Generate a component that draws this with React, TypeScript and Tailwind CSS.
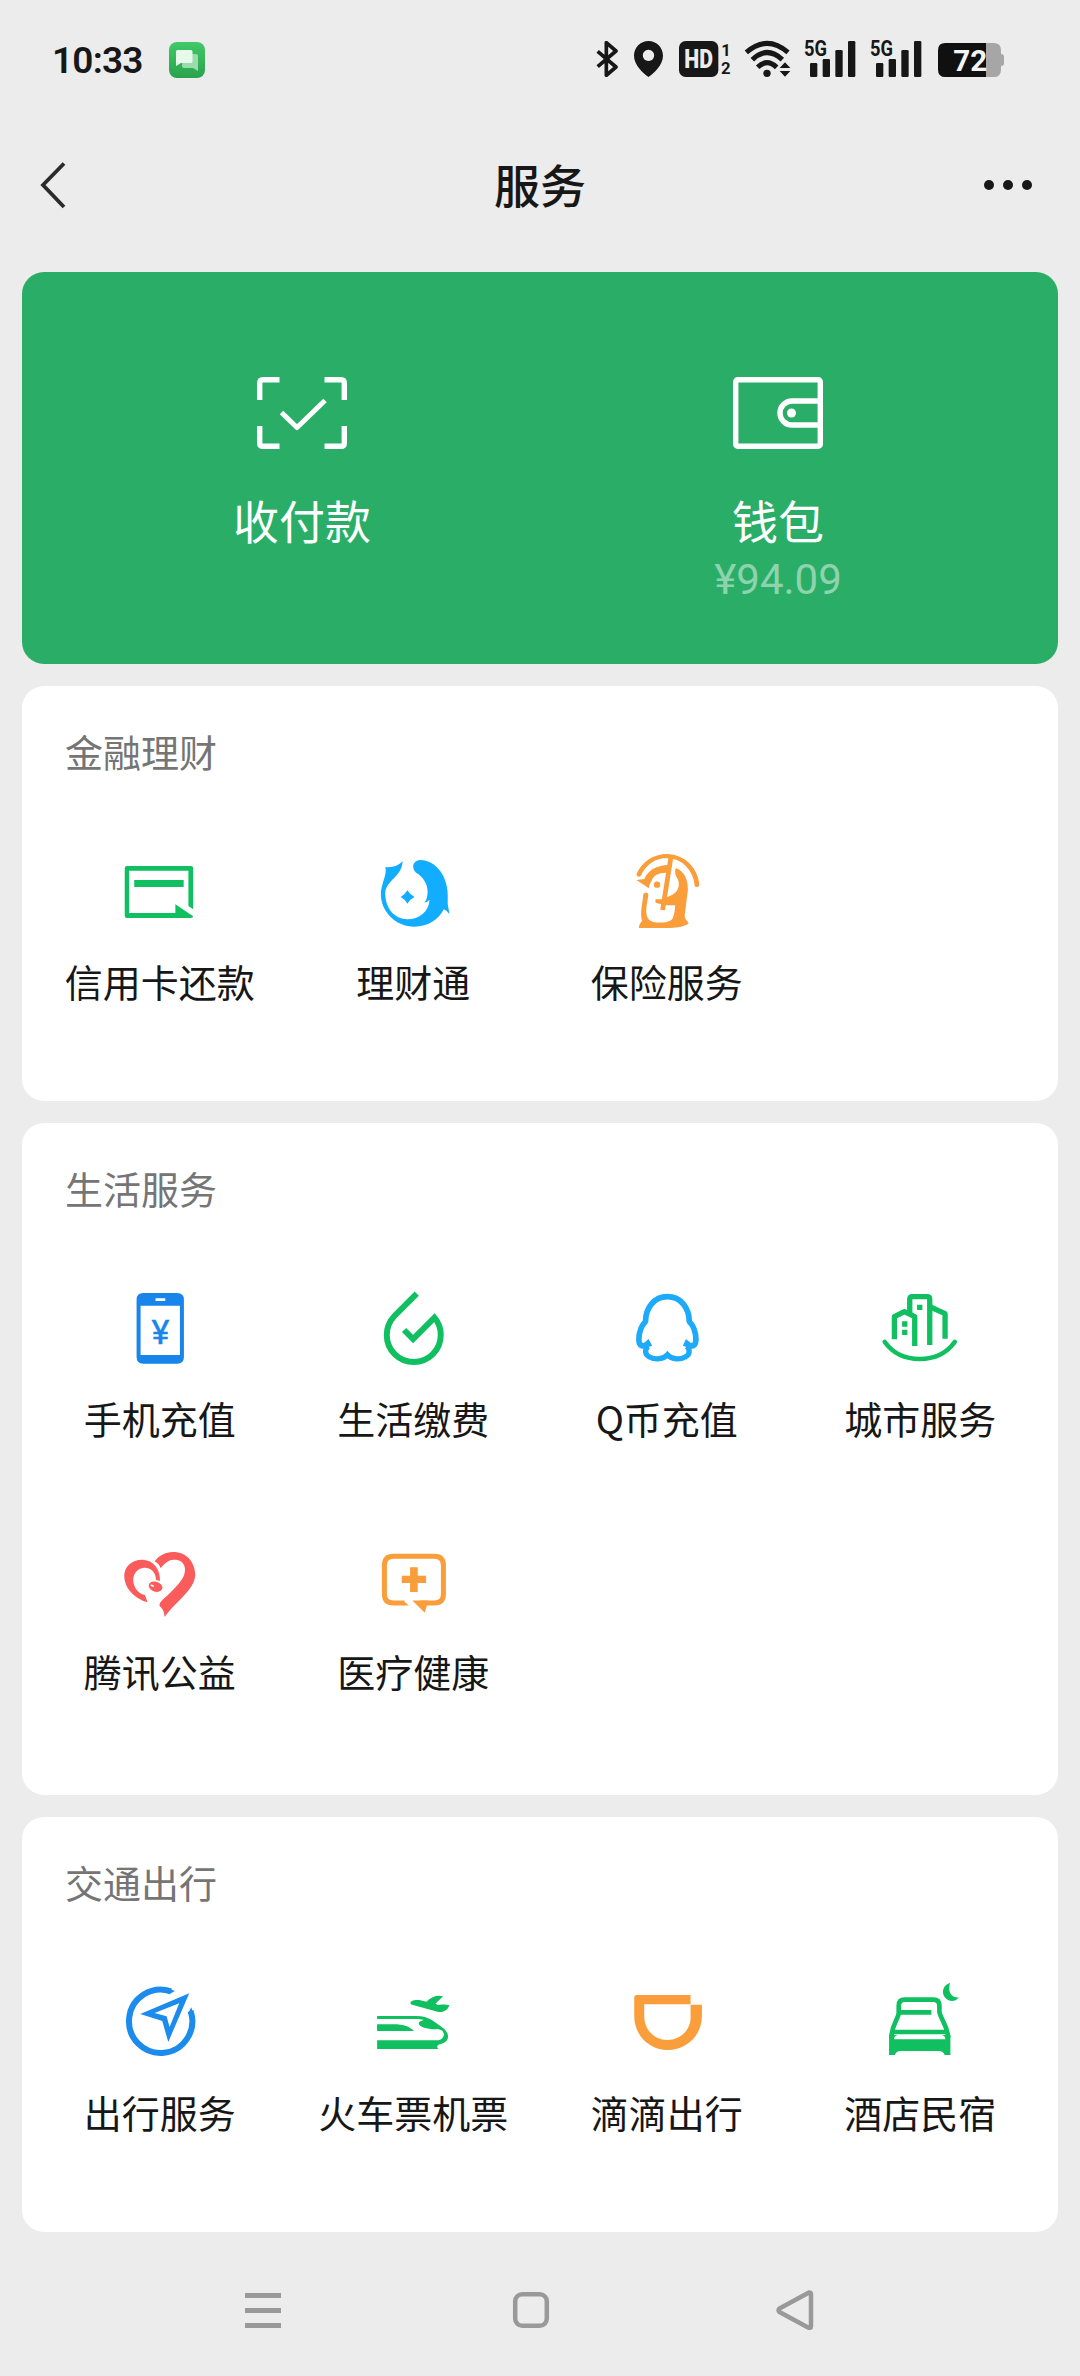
import type { ReactNode } from "react";

type Service = { label: string; icon: ReactNode };
type Section = { title: string; height: string; services: Service[] };

function Icon({ box, children }: { box: string; children: ReactNode }) {
  return (
    <svg
      viewBox={box}
      preserveAspectRatio="none"
      fill="none"
      className="block h-20 w-20 overflow-visible"
    >
      {children}
    </svg>
  );
}

const creditCard = (
  <Icon box="50 36 202.3 240">
    <path
      fill="#10c060"
      d="M62 84Q62 78 68 78H229Q235 78 235 84V208L223 198V92H73V219H190V193L235 229Q235 234 229 234H68Q62 234 62 228Z"
    />
    <path fill="#10c060" d="M86 120H211V141H86Z" />
  </Icon>
);

const wealth = (
  <Icon box="691 36 202.3 240">
    <path
      fill="#12adff"
      d="M766 64C755 78 738 84 722 81C727 102 715 122 711 155C708 215 750 260 795 260C832 260 858 237 870 208C877 211 880 217 884 222C883 205 879 197 880 180C884 110 850 60 810 60C790 62 788 86 800 98C817 110 829 130 829 155C829 170 827 178 821 187C826 187 830 184 834 179C832 215 808 238 778 238C745 237 722 205 722 160C724 120 764 112 766 64Z"
    />
    <path fill="#12adff" d="M778 151Q784 163 796 171Q784 178 778 191Q772 178 761 171Q772 163 778 151Z" />
  </Icon>
);

const insurance = (
  <Icon box="1332 36 202.3 240">
    <path stroke="#fa9d3b" strokeWidth="12" strokeLinecap="round" d="M1362 104C1374 70 1401 48 1434 48C1476 50 1505 88 1509 135" />
    <path
      fill="#fa9d3b"
      d="M1356 120L1376 117C1384 93 1404 76 1438 75L1434 98C1412 97 1397 107 1394 124C1390 130 1388 138 1387 145Z"
    />
    <path
      fill="#fa9d3b"
      d="M1457 85C1478 95 1486 120 1486 150L1478 225C1477 240 1487 243 1488 250C1478 260 1462 263 1440 264H1362C1362 256 1365 249 1370 243C1364 215 1372 190 1373 163C1375 157 1385 157 1386 163C1384 190 1374 222 1388 240C1398 251 1438 251 1447 236C1453 222 1453 208 1454 196H1428L1404 188V178H1420L1432 172C1456 163 1464 148 1463 130C1463 115 1452 112 1454 88Z"
    />
    <path stroke="#fa9d3b" strokeWidth="12" d="M1443 52L1422 210" />
    <ellipse cx="1408" cy="134" rx="8" ry="9.5" fill="#fa9d3b" />
  </Icon>
);

const phone = (
  <Icon box="239.25 87 240 240">
    <path
      fill="#1985ea"
      fillRule="evenodd"
      d="M309 99H411Q431 99 431 119V291Q431 311 411 311H309Q289 311 289 291V119Q289 99 309 99ZM301 137V285H419V137ZM346 115V123H375V115Z"
    />
    <text x="360.5" y="251" fill="#1985ea" stroke="#1985ea" strokeWidth="1.500" textAnchor="middle" className="font-['Roboto',sans-serif] text-[102px]">
      ¥
    </text>
  </Icon>
);

const utilities = (
  <Icon box="999.75 87 240 240">
    <path
      stroke="#10c060"
      strokeWidth="18"
      d="M1131 101L1064 168C1049 184 1041 203 1041 225A81 81 0 0 0 1203 225C1203 204 1196 187 1184 173L1120 237L1093 210"
    />
  </Icon>
);

const qcoin = (
  <Icon box="200.3 87 240 240">
    <path
      stroke="#1eaafa"
      strokeWidth="17"
      strokeLinejoin="round"
      d="M321.500 110C281 110 256 145 256 184C243 198 236 215 236 238C236 254 243 262 254 255M321.500 110C362 110 387 145 387 184C400 198 407 215 407 238C407 254 400 262 389 255"
    />
    <path fill="#1eaafa" d="M265 237L276 257L250 266L243 256ZM377 237L368 257L394 266L400 256Z" />
    <path
      stroke="#1eaafa"
      strokeWidth="16"
      d="M264 259C252 268 254 285 268 291C287 301 310 297 321.500 284C333 297 356 301 375 291C389 285 391 268 379 259"
    />
  </Icon>
);

const city = (
  <Icon box="960.8 87 240 240">
    <g stroke="#10c060" strokeWidth="16" strokeLinejoin="round">
      <path d="M1004 238V170L1034 155L1065 170V258" />
      <path d="M1050 160V118Q1050 110 1058 110H1102Q1110 110 1110 118V255" />
      <path d="M1112 141L1156 161V236" />
    </g>
    <path stroke="#10c060" strokeWidth="14" strokeLinecap="round" d="M975 246Q1012 297 1080 297Q1148 297 1185 246" />
    <path fill="#10c060" d="M1072 134H1088V150H1072ZM1027 184H1043V200H1027ZM1027 209H1043V225H1027Z" />
  </Icon>
);

const charity = (
  <Icon box="239.25 846 240 240">
    <path
      fill="#fa5c5c"
      d="M322 1027C283 1015 252 985 252 947C252 920 275 898 308 899C342 901 361 930 359 963L347 959C347 938 333 922 312 923C291 924 278 942 279 962C280 985 298 1002 314 1005Z"
    />
    <path
      fill="#fa5c5c"
      d="M343 904C355 888 375 876 398 876C440 876 465 908 465 945C462 990 413 1018 373 1071C372 1055 367 1045 358 1038C355 1024 375 1015 395 993C420 968 436 950 434 925C432 905 415 898 400 899C380 900 370 915 361 924C357 914 350 907 343 904Z"
    />
    <ellipse cx="346" cy="980" rx="21" ry="15" fill="#fa5c5c" transform="rotate(18 346 980)" />
    <ellipse cx="336" cy="977" rx="6" ry="3" fill="#fff" transform="rotate(18 336 977)" />
  </Icon>
);

const medical = (
  <Icon box="999.75 846 240 240">
    <path stroke="#fa9d3b" strokeWidth="15" d="M1094 1029H1061Q1034 1029 1034 1002V916Q1034 889 1061 889H1184Q1211 889 1211 916V1002Q1211 1029 1184 1029H1140" />
    <path fill="#fa9d3b" d="M1090 1021.500L1107 1036.500H1090ZM1118 1021.500H1166L1155 1058Z" />
    <path fill="#fa9d3b" d="M1111 922H1134V947H1159V969H1134V996H1111V969H1086V947H1111Z" />
  </Icon>
);

const travel = (
  <Icon box="239.25 399 240 240">
    <path stroke="#1c8bee" strokeWidth="18" d="M392 424A95 95 0 1 0 451 483" />
    <path fill="#1c8bee" d="M384 415L404 423L388 432ZM443 492L453 472L460 492Z" />
    <path
      fill="#1c8bee"
      fillRule="evenodd"
      d="M447 430L384 576L366 513L300 492ZM417 460L343 489L379 499L388 531Z"
    />
  </Icon>
);

const train = (
  <Icon box="999.75 399 240 240">
    <path
      fill="#10c060"
      d="M1012 498H1130C1170 498 1182 516 1205 530C1232 548 1233 576 1200 583C1190 587 1191 593 1196 597H1012V571H1192C1212 570 1219 550 1205 541L1194 537C1172 540 1140 532 1137 521C1136 515 1145 513 1152 510C1145 507 1138 507 1128 507H1012Z"
    />
    <path fill="#10c060" d="M1012 523H1060C1092 523 1112 531 1122 543H1012Z" />
    <path fill="#10c060" d="M1112 458C1116 449 1130 450 1138 450L1160 455C1176 439 1195 434 1210 439L1187 461C1198 469 1210 460 1229 466C1223 483 1208 489 1193 485L1120 465C1115 464 1112 461 1112 458Z" />
  </Icon>
);

const didi = (
  <Icon box="200.3 99 240 240">
    <path
      fill="#fa9d3b"
      d="M222 143Q222 135 230 135H391V163H252V199C252 241 284 270 321 270C360 270 391 240 391 203V164H425V198C425 257 378 300 322 300C268 300 222 257 222 198Z"
    />
  </Icon>
);

const hotel = (
  <Icon box="960.8 99 240 240">
    <path
      stroke="#10c060"
      strokeWidth="14"
      d="M995 264C995 225 1017 205 1017 188V167Q1017 149 1035 149H1121Q1139 149 1139 167V184C1139 202 1165 228 1165 264"
    />
    <path stroke="#10c060" strokeWidth="14" d="M1020 187H1115M1000 246H1160" />
    <path
      fill="#10c060"
      d="M988 255H1013Q1003 258 1003 268H1157Q1157 258 1147 255H1172V315H1155Q1150 303 1138 303H1022Q1010 303 1005 315H988Z"
    />
    <path fill="#10c060" d="M1171 98C1150 106 1144 125 1155 142C1166 157 1190 156 1197 142C1178 144 1162 128 1171 98Z" />
  </Icon>
);

const sections: Section[] = [
  {
    title: "金融理财",
    height: "h-[415px]",
    services: [
      { label: "信用卡还款", icon: creditCard },
      { label: "理财通", icon: wealth },
      { label: "保险服务", icon: insurance },
    ],
  },
  {
    title: "生活服务",
    height: "h-[672px]",
    services: [
      { label: "手机充值", icon: phone },
      { label: "生活缴费", icon: utilities },
      { label: "Q币充值", icon: qcoin },
      { label: "城市服务", icon: city },
      { label: "腾讯公益", icon: charity },
      { label: "医疗健康", icon: medical },
    ],
  },
  {
    title: "交通出行",
    height: "h-[415px]",
    services: [
      { label: "出行服务", icon: travel },
      { label: "火车票机票", icon: train },
      { label: "滴滴出行", icon: didi },
      { label: "酒店民宿", icon: hotel },
    ],
  },
];

function Signal() {
  return (
    <svg viewBox="732 120 156 111" className="h-[37px] w-[52px] overflow-visible" fill="#171717">
      <text x="732" y="167" textLength="69" lengthAdjust="spacingAndGlyphs" className="font-['Roboto',sans-serif] text-[65px] font-bold">
        5G
      </text>
      <rect x="750" y="189" width="22" height="42" rx="4" />
      <rect x="788" y="177" width="22" height="54" rx="4" />
      <rect x="826" y="150" width="22" height="81" rx="4" />
      <rect x="864" y="123" width="22" height="108" rx="4" />
    </svg>
  );
}

function StatusBar() {
  return (
    <div className="flex h-[120px] items-center pr-[76px] pl-[52px]">
      <span className="w-[117px] font-['Roboto',sans-serif] text-[37px] leading-none font-semibold tracking-[-0.8px] text-[#171717]">
        10:33
      </span>
      <svg viewBox="0 0 36 36" className="h-9 w-9">
        <defs>
          <linearGradient id="chat" x1="0" y1="0" x2="0" y2="1">
            <stop offset="0" stopColor="#41c968" />
            <stop offset="1" stopColor="#2aa24c" />
          </linearGradient>
        </defs>
        <rect width="36" height="36" rx="8" fill="url(#chat)" />
        <path fill="#9bdcab" d="M14 12H27Q29 12 29 14V29L24 26H15Q13 26 13 24Z" />
        <path fill="#e6f9ea" d="M8.500 8H22Q23.500 8 23.500 9.500V19.500Q23.500 21 22 21H12L7 24V9.500Q7 8 8.500 8Z" />
      </svg>
      <div className="mb-[3px] ml-auto flex items-end">
        <svg viewBox="107 123 66 108" className="h-9 w-[22px]" fill="none">
          <path stroke="#171717" strokeWidth="11" strokeLinejoin="round" d="M112 154L167 201L138 226V128L167 153L112 200" />
        </svg>
        <svg viewBox="222 123 87 108" className="ml-4 h-9 w-[29px]">
          <path
            fill="#171717"
            fillRule="evenodd"
            d="M265.500 123C241 123 222 143 222 167C222 195 250 220 265.500 231C281 220 309 195 309 167C309 143 290 123 265.500 123ZM265.500 149A17 17 0 1 1 265.400 149Z"
          />
        </svg>
        <svg viewBox="355 123 156 108" className="ml-4 h-9 w-[52px] overflow-visible" fill="#171717">
          <rect x="355" y="123" width="118" height="108" rx="20" />
          <text x="371" y="204" fill="#ececec" textLength="86" lengthAdjust="spacingAndGlyphs" className="font-['Roboto',sans-serif] text-[75px] font-black">
            HD
          </text>
          <text x="482" y="168" className="font-['Roboto',sans-serif] text-[50px] font-bold">1</text>
          <text x="481" y="221" className="font-['Roboto',sans-serif] text-[50px] font-bold">2</text>
        </svg>
        <svg viewBox="555 123 135 108" className="ml-[14px] h-9 w-[45px] overflow-visible" fill="none">
          <g stroke="#171717" strokeWidth="15">
            <path d="M559 157Q621 103 684 157" />
            <path d="M577 179Q621 136 667 179" />
            <path d="M593 202Q621 174 650 202" />
          </g>
          <circle cx="621" cy="220" r="11" fill="#171717" />
          <path fill="#171717" d="M659 204L675 187L691 204ZM659 213H691L675 230Z" />
        </svg>
        <div className="ml-[14px] flex">
          <Signal />
        </div>
        <div className="ml-[14px] flex">
          <Signal />
        </div>
        <svg viewBox="1134 123 198 108" className="ml-4 h-9 w-[66px]">
          <path fill="#a6a6a6" d="M1260 129H1301Q1323 129 1323 151V162Q1332 162 1332 170V190Q1332 198 1323 198V209Q1323 231 1301 231H1260Z" />
          <path fill="#101010" d="M1156 129H1278V231H1156Q1134 231 1134 209V151Q1134 129 1156 129Z" />
          <text x="1180" y="213" fill="#f4f4f4" textLength="102" lengthAdjust="spacingAndGlyphs" className="font-['Roboto',sans-serif] text-[91px] font-bold">
            72
          </text>
        </svg>
      </div>
    </div>
  );
}

function Header() {
  return (
    <header className="flex h-[130px] items-center justify-between pr-12 pl-10">
      <svg viewBox="0 0 64 48" className="h-12 w-16" fill="none" stroke="#2b2b2b" strokeWidth="3.800">
        <path d="M24 2.500L3 24L24 46" />
      </svg>
      <h1 className="-mt-1 text-[46px] leading-none font-medium text-[#171717]">服务</h1>
      <div className="flex w-14 justify-between pl-[8px]">
        <span className="h-[10px] w-[10px] rounded-full bg-[#171717]" />
        <span className="h-[10px] w-[10px] rounded-full bg-[#171717]" />
        <span className="h-[10px] w-[10px] rounded-full bg-[#171717]" />
      </div>
    </header>
  );
}

function WalletCard() {
  return (
    <section className="mx-[22px] mt-[22px] grid h-[392px] grid-cols-2 rounded-[22px] bg-[#2aae67] px-[42px] pt-[105px] text-white">
      <div className="flex flex-col items-center">
        <svg viewBox="0 0 90 72" className="h-[72px] w-[90px]" fill="none" stroke="#fff" strokeWidth="5.400">
          <path d="M2.700 23V6Q2.700 2.700 6 2.700H22.500M67.500 2.700H84Q87.300 2.700 87.300 6V23M87.300 49V66Q87.300 69.300 84 69.300H67.500M22.500 69.300H6Q2.700 69.300 2.700 66V49" />
          <path strokeWidth="5" strokeLinejoin="round" d="M24.500 35.500L40 50.500L68 23.500" />
        </svg>
        <span className="mt-[47px] text-[46px] leading-[46px]">收付款</span>
      </div>
      <div className="flex flex-col items-center">
        <svg viewBox="0 0 90 72" className="h-[72px] w-[90px]" fill="none" stroke="#fff" strokeWidth="5.400">
          <rect x="2.700" y="2.700" width="84.600" height="66.600" rx="2" />
          <path d="M87 24H59A12 12 0 0 0 59 48H87" />
          <circle cx="58.500" cy="36" r="4.500" fill="#fff" stroke="none" />
        </svg>
        <span className="mt-[47px] text-[46px] leading-[46px]">钱包</span>
        <span className="mt-[17px] font-['Roboto','Noto_Sans_CJK_SC',sans-serif] text-[42px] leading-[42px] text-[#8ed3ad]">
          ¥94.09
        </span>
      </div>
    </section>
  );
}

function ServiceSection({ title, height, services }: Section) {
  return (
    <section className={`mx-[22px] mt-[22px] rounded-[22px] bg-white px-[11px] ${height}`}>
      <h2 className="pt-[46px] pl-8 text-[38px] leading-[38px] text-[#757575]">{title}</h2>
      <div className="mt-[82px] grid grid-cols-4">
        {services.map((service) => (
          <div key={service.label} className="flex h-[253px] flex-col items-center">
            {service.icon}
            <span className="mt-[30px] text-[38px] leading-[38px] whitespace-nowrap text-[#171717]">
              {service.label}
            </span>
          </div>
        ))}
      </div>
    </section>
  );
}

function NavBar() {
  return (
    <nav className="flex h-[144px] items-center pt-3 pl-[243px]">
      <svg viewBox="0 0 40 40" className="h-10 w-10" fill="#999">
        <path d="M2 3H38V8H2ZM2 18H38V23H2ZM2 33H38V38H2Z" />
      </svg>
      <svg viewBox="0 0 40 40" className="ml-[228px] h-10 w-10" fill="none" stroke="#999" strokeWidth="4.500">
        <rect x="4.200" y="4.200" width="31.600" height="31.600" rx="7" />
      </svg>
      <svg viewBox="0 0 40 40" className="ml-[224px] h-10 w-10" fill="none" stroke="#999" strokeWidth="4.500" strokeLinejoin="round">
        <path d="M34 2.500Q36 2.500 36 4.500V36Q36 38 34 38L4.500 22Q2.500 20.300 4.500 18.500Z" />
      </svg>
    </nav>
  );
}

function App() {
  return (
    <div className="h-[2376px] w-[1080px] overflow-hidden bg-[#ececec] font-['Noto_Sans_CJK_SC',sans-serif]">
      <StatusBar />
      <Header />
      <WalletCard />
      {sections.map((section) => (
        <ServiceSection key={section.title} {...section} />
      ))}
      <NavBar />
    </div>
  );
}

export default App;
